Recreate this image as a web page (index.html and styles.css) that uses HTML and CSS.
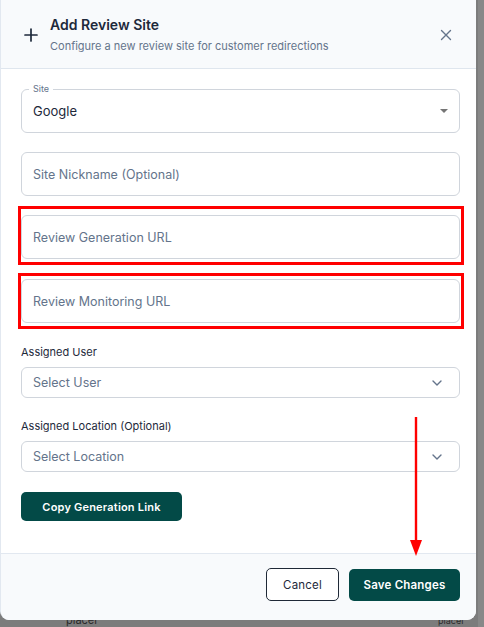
FILE: index.html
```html
<!DOCTYPE html>
<html lang="en">
<head>
	<meta charset="UTF-8">
	<meta name="viewport" content="width=device-width, initial-scale=1.0">
	<title>Add Review Site</title>
	<link rel="stylesheet" href="styles.css">
</head>
<body>

	<!-- page behind the overlay -->
	<div class="backdrop">
		<span class="behind behind-left">placei</span>
		<span class="behind behind-right">placei</span>
	</div>

	<div class="modal">
		<div class="modal-header">
			<svg class="icon-plus" width="14" height="14" viewBox="0 0 14 14">
				<path d="M7 1v12M1 7h12" stroke="#1e293b" stroke-width="1.7" stroke-linecap="round"/>
			</svg>
			<div class="header-text">
				<h2>Add Review Site</h2>
				<p>Configure a new review site for customer redirections</p>
			</div>
			<svg class="icon-close" width="12" height="12" viewBox="0 0 12 12">
				<path d="M1.5 1.5l9 9M10.5 1.5l-9 9" stroke="#64748b" stroke-width="1.4" stroke-linecap="round"/>
			</svg>
		</div>

		<div class="modal-body">
			<!-- Site select with floating label -->
			<div class="field outlined">
				<span class="float-label">Site</span>
				<span class="value">Google</span>
				<span class="caret"></span>
			</div>

			<div class="field text-field nickname">
				<span class="placeholder">Site Nickname (Optional)</span>
			</div>

			<div class="highlight first">
				<div class="field text-field">
					<span class="placeholder">Review Generation URL</span>
				</div>
			</div>

			<div class="highlight second">
				<div class="field text-field">
					<span class="placeholder">Review Monitoring URL</span>
				</div>
			</div>

			<label class="form-label user-label">Assigned User</label>
			<div class="select-box">
				<span class="placeholder">Select User</span>
				<svg width="10" height="6" viewBox="0 0 10 6"><path d="M1 1l4 4 4-4" fill="none" stroke="#64748b" stroke-width="1.4" stroke-linecap="round" stroke-linejoin="round"/></svg>
			</div>

			<label class="form-label location-label">Assigned Location (Optional)</label>
			<div class="select-box">
				<span class="placeholder">Select Location</span>
				<svg width="10" height="6" viewBox="0 0 10 6"><path d="M1 1l4 4 4-4" fill="none" stroke="#64748b" stroke-width="1.4" stroke-linecap="round" stroke-linejoin="round"/></svg>
			</div>

			<button type="button" class="btn btn-primary copy-btn">Copy Generation Link</button>
		</div>

		<div class="modal-footer">
			<button type="button" class="btn btn-outline">Cancel</button>
			<button type="button" class="btn btn-primary save-btn">Save Changes</button>
		</div>

		<!-- annotation arrow -->
		<svg class="arrow" width="16" height="142" viewBox="0 0 16 142">
			<path d="M8 0v126" stroke="#ff0000" stroke-width="2.4"/>
			<path d="M2 123h12l-6 16z" fill="#ff0000"/>
		</svg>
	</div>

</body>
</html>
```

FILE: styles.css
```css
* {
	box-sizing: border-box;
}
body {
	margin: 0;
	font-family: Inter, "Noto Sans", Arial, sans-serif;
	background: #7a7a7a;
	width: 484px;
	height: 627px;
	overflow: hidden;
	position: relative;
}
.backdrop {
	position: absolute;
	inset: 0;
	background: linear-gradient(to right, #7c7c7c 0, #7c7c7c 478px, #888 478px);
}
.behind {
	position: absolute;
	top: 615px;
	font-size: 11px;
	line-height: 11px;
	color: #2a2a2a;
}
.behind-left {
	left: 66px;
}
.behind-right {
	left: 438px;
	font-size: 9px;
}
.modal {
	position: relative;
	width: 476px;
	height: 620px;
	background: #fff;
	border-left: 1px solid #e2e8f0;
	border-radius: 0 0 9px 9px;
	display: flex;
	flex-direction: column;
	overflow: hidden;
}
.modal-header {
	height: 69px;
	background: #f8fafc;
	border-bottom: 1px solid #dfe6ee;
	display: flex;
	align-items: flex-start;
	padding: 16px 24px 0 23px;
}
.icon-plus {
	margin-top: 12px;
	flex: none;
}
.header-text {
	margin-left: 12px;
	flex: 1;
}
.header-text h2 {
	margin: 0;
	font-size: 14px;
	font-weight: 600;
	color: #1e293b;
	line-height: 18px;
}
.header-text p {
	margin: 5px 0 0;
	font-size: 11px;
	color: #64748b;
	line-height: 14px;
}
.icon-close {
	margin-top: 13px;
	flex: none;
}
.modal-body {
	flex: 1;
	padding: 20px 16px 0 20px;
	display: flex;
	flex-direction: column;
	align-items: stretch;
}
.field {
	height: 44px;
	border: 1px solid #d0d5dc;
	border-radius: 6px;
	display: flex;
	align-items: center;
	padding: 0 12px 0 11px;
	font-size: 13px;
	position: relative;
}
.float-label {
	position: absolute;
	top: -6px;
	left: 7px;
	padding: 0 4px;
	background: #fff;
	font-size: 9px;
	line-height: 10px;
	color: #64748b;
}
.value {
	color: #1e293b;
	flex: 1;
}
.caret {
	width: 0;
	height: 0;
	border-left: 4.5px solid transparent;
	border-right: 4.5px solid transparent;
	border-top: 4.5px solid #757575;
	margin-right: -1px;
}
.placeholder {
	color: #64748b;
	font-size: 12.5px;
	flex: 1;
}
.nickname {
	margin-top: 19px;
}
.highlight {
	border: 3px solid #ff0000;
	margin: 0 -4px 0 -3px;
	padding: 0 1px 0 0;
}
.highlight.first {
	margin-top: 10px;
	padding-top: 6px;
	padding-bottom: 3px;
}
.highlight.second {
	margin-top: 8px;
	padding-top: 3px;
	padding-bottom: 3px;
}
.form-label {
	font-size: 11px;
	color: #1e293b;
	line-height: 14px;
}
.user-label {
	margin-top: 16px;
}
.location-label {
	margin-top: 21px;
}
.select-box {
	margin-top: 8px;
	height: 31px;
	border: 1px solid #d0d5dc;
	border-radius: 6px;
	display: flex;
	align-items: center;
	padding: 0 17px 0 11px;
}
.btn {
	font-family: inherit;
	font-size: 11px;
	border-radius: 5px;
	cursor: pointer;
	letter-spacing: 0.2px;
}
.btn-primary {
	background: #034a47;
	color: #fff;
	border: none;
	font-weight: 600;
}
.copy-btn {
	margin-top: 20px;
	align-self: flex-start;
	width: 161px;
	height: 29px;
}
.modal-footer {
	height: 67px;
	background: #f8fafc;
	border-top: 1px solid #e2e8f0;
	display: flex;
	justify-content: flex-end;
	align-items: flex-start;
	gap: 10px;
	padding: 14px 16px 0 0;
}
.btn-outline {
	background: #fff;
	border: 1px solid #1f2937;
	color: #1e293b;
	width: 73px;
	height: 33px;
	font-size: 11.5px;
}
.save-btn {
	width: 111px;
	height: 32px;
	margin-top: 1px;
	font-size: 11.5px;
}
.arrow {
	position: absolute;
	left: 407px;
	top: 417px;
}
```
